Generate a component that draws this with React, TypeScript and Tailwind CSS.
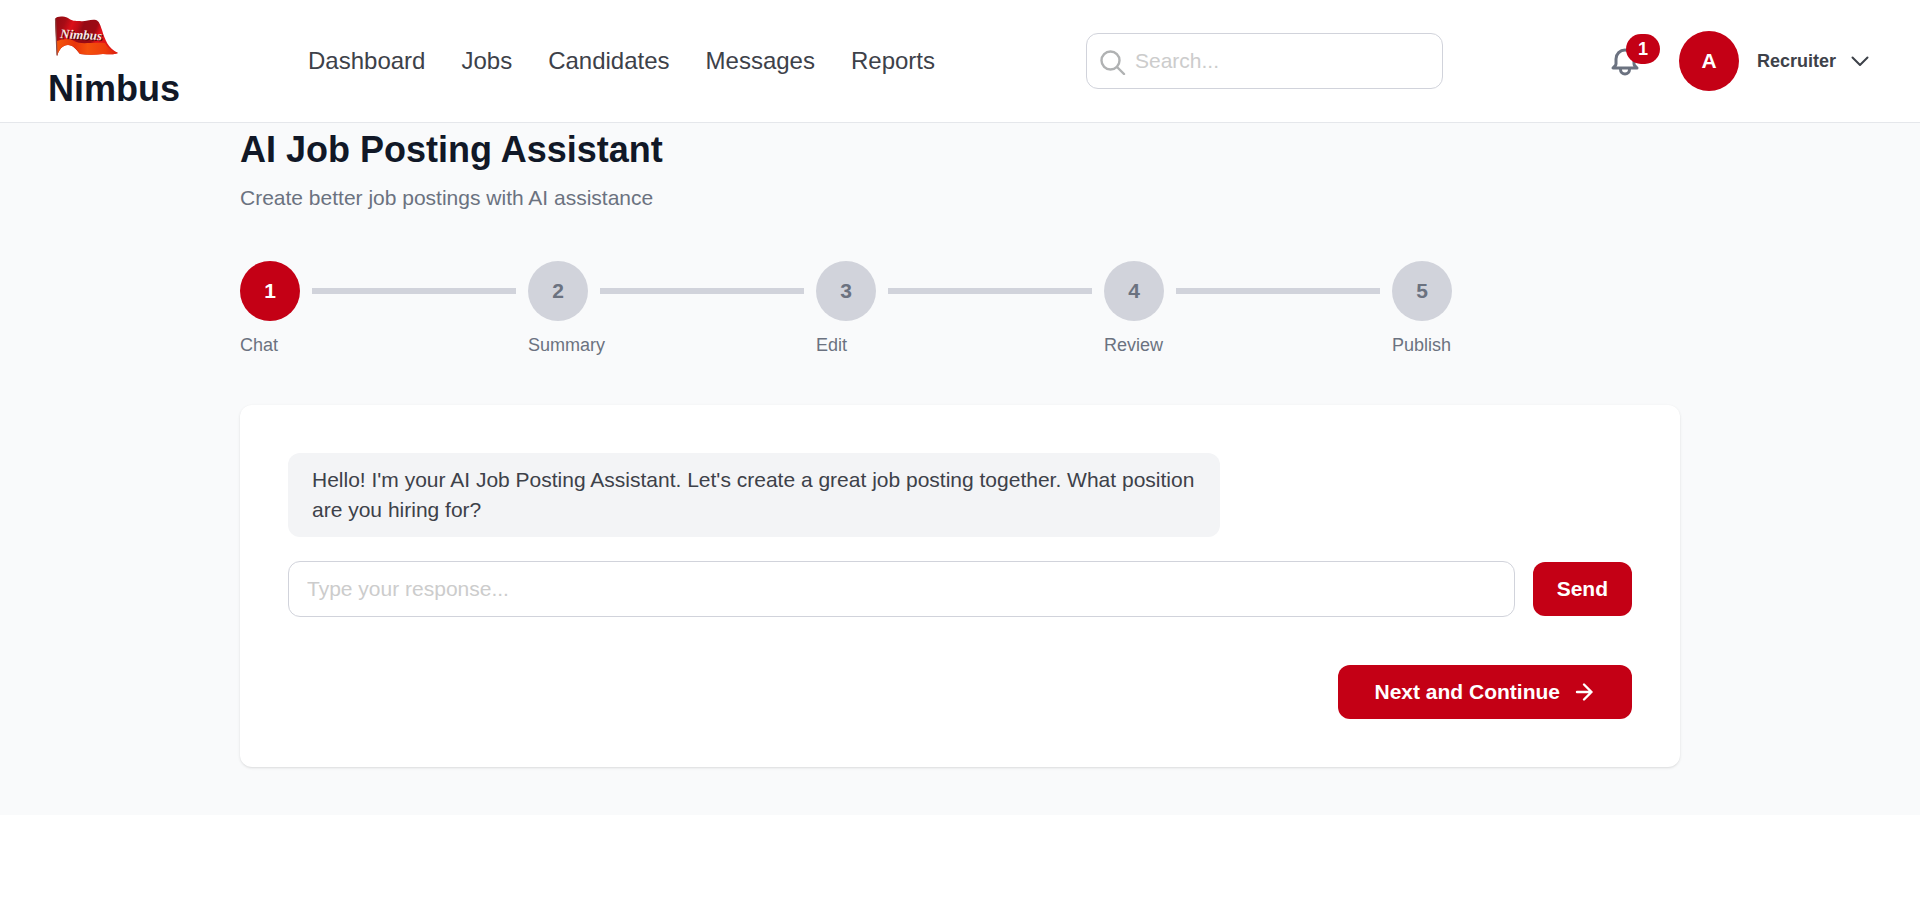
import React, { useState } from 'react';

const navLinks = ['Dashboard', 'Jobs', 'Candidates', 'Messages', 'Reports'];
const steps = ['Chat', 'Summary', 'Edit', 'Review', 'Publish'];

function FlagLogo() {
  return (
    <svg viewBox="0 0 65 43" className="h-[43px] w-[65px]" aria-hidden="true">
      <defs>
        <linearGradient id="flagRed" x1="0" x2="1" y1="0" y2="0.25">
          <stop offset="0" stopColor="#8f0a12" />
          <stop offset="0.18" stopColor="#a80c15" />
          <stop offset="0.3" stopColor="#dc0f18" />
          <stop offset="0.4" stopColor="#c00c16" />
          <stop offset="0.48" stopColor="#960a14" />
          <stop offset="0.68" stopColor="#9c0a14" />
          <stop offset="0.76" stopColor="#e0101a" />
          <stop offset="1" stopColor="#e01616" />
        </linearGradient>
        <linearGradient id="flagOrange" x1="0" x2="1" y1="0" y2="0">
          <stop offset="0" stopColor="#f4560c" />
          <stop offset="0.3" stopColor="#e8340a" />
          <stop offset="0.5" stopColor="#f4500c" />
          <stop offset="0.8" stopColor="#ee3c0c" />
          <stop offset="1" stopColor="#d81c10" />
        </linearGradient>
      </defs>
      <path
        d="M1 5 C3 2 9 2 14 4 C18 7 21 7 26 7 C31 8 36 5 42 6 C45 7 46 10 48 16 C51 26 54 34 64 39 C60 41 54 40 49 40 C41 41 33 41 26 40 C22 35 19 31 14 31 C8 31 5 36 3 42 Z"
        fill="url(#flagRed)"
      />
      <path
        d="M3 27 C9 25 15 24 20 27 C27 31 36 28 51 29 C54 34 58 37 64 39 C60 41 54 40 49 40 C41 41 33 41 26 40 C22 35 19 31 14 31 C8 31 5 36 3 42 Z"
        fill="url(#flagOrange)"
      />
      <path d="M1.500 5 L3 41" stroke="#8c4a46" strokeWidth="1.2" strokeLinecap="round" />
      <g className="font-['Liberation_Serif',serif] font-bold italic" fontSize="13">
        <text x="7" y="25" fill="#4a0508" transform="rotate(3 7 25)">
          Nimbus
        </text>
        <text x="6" y="24" fill="#f4e9e6" transform="rotate(3 6 24)">
          Nimbus
        </text>
      </g>
    </svg>
  );
}

function Header() {
  return (
    <header className="flex h-[123px] items-center border-b border-[#e5e7eb] bg-white px-12">
      <a href="#" className="flex flex-col gap-2 pt-1">
        <span className="pl-1.5">
          <FlagLogo />
        </span>
        <span className="text-4xl leading-[48px] font-bold text-[#111827]">Nimbus</span>
      </a>

      <nav className="ml-32 flex gap-9">
        {navLinks.map((link) => (
          <a key={link} href="#" className="text-2xl text-[#3d4149]">
            {link}
          </a>
        ))}
      </nav>

      <div className="relative ml-[151px] w-[357px]">
        <input
          type="search"
          aria-label="Search"
          placeholder="Search..."
          className="h-14 w-full rounded-xl border border-[#d1d3db] bg-white pr-4 pl-12 text-[21px] text-gray-700 placeholder-[#cccccc] outline-none"
        />
        <svg
          viewBox="0 0 26 26"
          className="pointer-events-none absolute top-4 left-3.5 h-[26px] w-[26px]"
          fill="none"
          stroke="#b0b2b3"
          strokeWidth="2.4"
          strokeLinecap="round"
        >
          <circle cx="10.5" cy="11.500" r="9" />
          <path d="M17 18l7 7" />
        </svg>
      </div>

      <div className="ml-auto flex items-center">
        <button type="button" aria-label="Notifications" className="relative mr-9 text-[#6b7280]">
          <svg
            viewBox="0 0 36 36"
            className="h-9 w-9"
            fill="none"
            stroke="currentColor"
            strokeWidth="3"
            strokeLinecap="round"
            strokeLinejoin="round"
          >
            <path d="M22.5 25H30l-2.1-2.1a3 3 0 0 1-.9-2.1V16a9 9 0 0 0-18 0v4.800c0 .8-.3 1.500-.9 2.100L6 25h7.500m9 0v1.500a4.500 4.500 0 1 1-9 0v-1.500m9 0h-9" />
          </svg>
          <span className="absolute -top-[9px] left-[19px] flex h-[30px] w-[34px] items-center justify-center rounded-full bg-[#c40015] text-lg font-bold text-white">
            1
          </span>
        </button>
        <button type="button" className="flex items-center text-[#3d4149]">
          <span className="flex h-15 w-15 items-center justify-center rounded-full bg-[#c40015] text-[21px] font-bold text-white">
            A
          </span>
          <span className="ml-[18px] text-lg font-bold">Recruiter</span>
          <svg
            viewBox="0 0 24 24"
            className="ml-3 h-6 w-6"
            fill="none"
            stroke="currentColor"
            strokeWidth="2"
            strokeLinecap="round"
            strokeLinejoin="round"
          >
            <path d="M4.500 8.500l7.500 7.500 7.500-7.500" />
          </svg>
        </button>
      </div>
    </header>
  );
}

function Stepper({ current }: { current: number }) {
  return (
    <ol className="mt-12 grid grid-cols-5">
      {steps.map((step, i) => (
        <li key={step}>
          <div className="flex items-center">
            <span
              className={
                i === current
                  ? 'flex h-15 w-15 shrink-0 items-center justify-center rounded-full bg-[#c40015] text-[21px] font-bold text-white'
                  : 'flex h-15 w-15 shrink-0 items-center justify-center rounded-full bg-[#d1d3db] text-[21px] font-bold text-[#6b7280]'
              }
            >
              {i + 1}
            </span>
            {i < steps.length - 1 && <span className="mx-3 h-1.5 flex-1 bg-[#d1d3db]" />}
          </div>
          <p className="mt-3 text-lg leading-6 text-[#6b7280]">{step}</p>
        </li>
      ))}
    </ol>
  );
}

function ChatCard() {
  const [message, setMessage] = useState('');

  const handleSubmit = (e: React.FormEvent) => {
    e.preventDefault();
    setMessage('');
  };

  return (
    <section className="mt-12 rounded-xl bg-white p-12 shadow-sm">
      <p className="max-w-[932px] rounded-xl bg-[#f3f4f6] px-6 py-3 text-[21px] leading-[30px] text-[#3d4149]">
        Hello! I'm your AI Job Posting Assistant. Let's create a great job posting together. What position are you
        hiring for?
      </p>

      <form onSubmit={handleSubmit} className="mt-6 flex items-center gap-[18px]">
        <input
          type="text"
          aria-label="Your response"
          value={message}
          onChange={(e) => setMessage(e.target.value)}
          placeholder="Type your response..."
          className="h-14 flex-1 rounded-xl border border-[#d1d3db] bg-white px-[18px] text-[21px] text-gray-700 placeholder-[#cccccc] outline-none"
        />
        <button
          type="submit"
          className="rounded-xl bg-[#c40015] px-6 py-3 text-[21px] leading-[30px] font-bold text-white"
        >
          Send
        </button>
      </form>

      <div className="mt-12 flex justify-end">
        <button
          type="button"
          className="flex items-center gap-3 rounded-xl bg-[#c40015] px-9 py-3 text-[21px] leading-[30px] font-bold text-white"
        >
          Next and Continue
          <svg
            viewBox="0 0 24 24"
            className="h-6 w-6"
            fill="none"
            stroke="currentColor"
            strokeWidth="2.4"
            strokeLinecap="round"
            strokeLinejoin="round"
          >
            <path d="M5 12h14.500M12 4.500l7.500 7.500-7.500 7.500" />
          </svg>
        </button>
      </div>
    </section>
  );
}

export default function App() {
  return (
    <div className="bg-gray-50 font-['Liberation_Sans',Arial,sans-serif]">
      <Header />
      <main className="mx-auto max-w-[1440px] pt-[3px] pb-12">
        <h1 className="text-4xl leading-[48px] font-bold text-[#111827]">AI Job Posting Assistant</h1>
        <p className="mt-[9px] text-[21px] leading-[30px] text-[#6b7280]">
          Create better job postings with AI assistance
        </p>
        <Stepper current={0} />
        <ChatCard />
      </main>
    </div>
  );
}
